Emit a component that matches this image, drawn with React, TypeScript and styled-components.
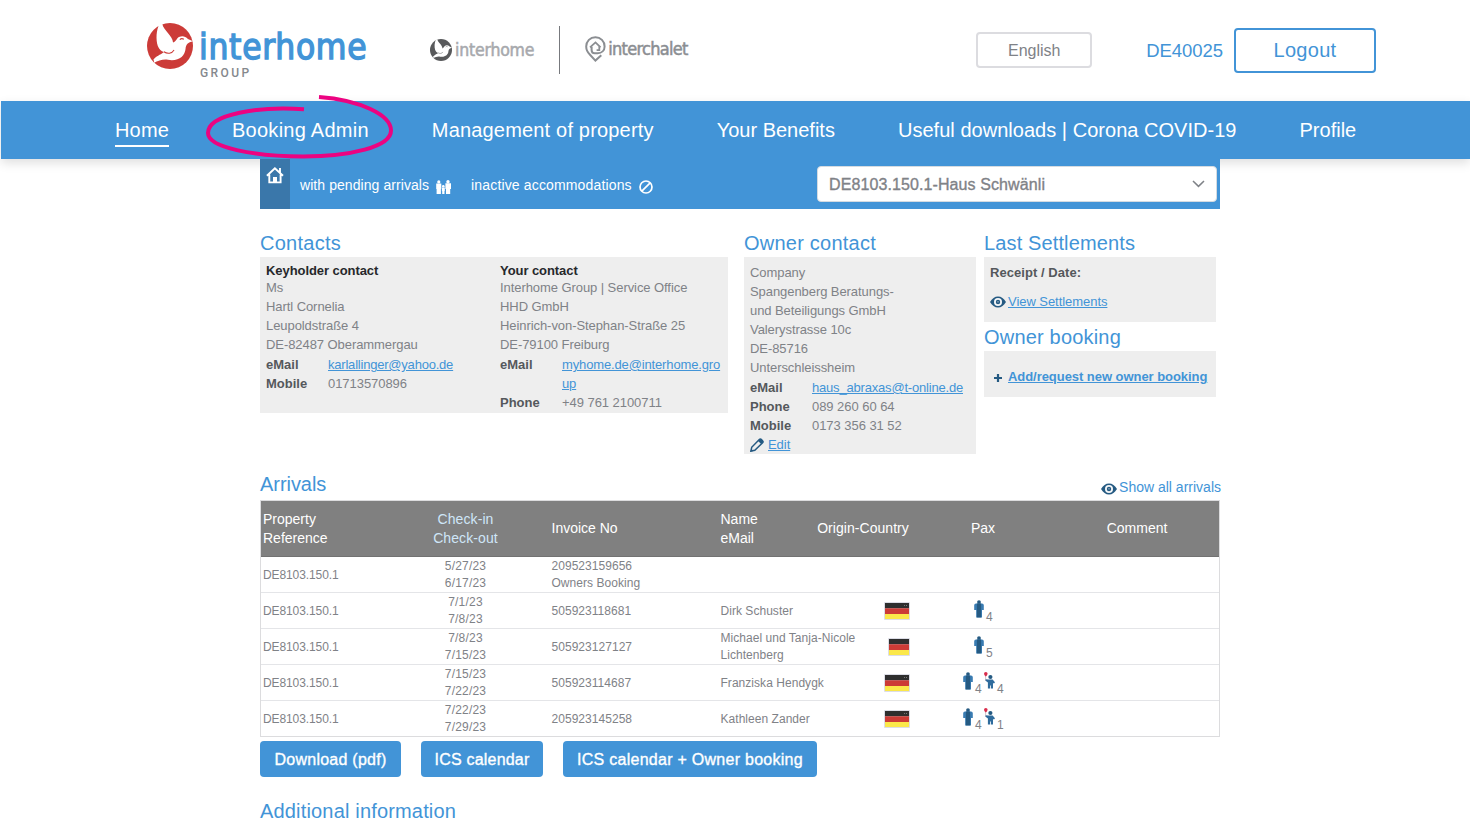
import React from 'react';
import styled, { createGlobalStyle } from 'styled-components';

const BLUE = '#4294d7';
const GREY = '#7f8287';
const NAVY = '#255a82';

const GlobalStyle = createGlobalStyle`
  * { box-sizing: border-box; }
  body { margin: 0; background: #fff; color: ${GREY}; font-family: "Liberation Sans", Arial, sans-serif; font-size: 13px; line-height: 19px; }
  #root { height: 827px; overflow: hidden; }
  a { color: ${BLUE}; }
  svg { display: block; flex: none; }
`;

/* Header */
const Header = styled.header`
  display: flex;
  align-items: flex-start;
  height: 101px;
  padding-left: 147px;
`;
const GroupLogo = styled.div`
  display: flex;
  width: 283px;
  padding-top: 23px;
  gap: 6px;
`;
const Wordmark = styled.div`
  display: flex;
  flex-direction: column;
  padding-top: 6px;
`;
const LogoName = styled.span`
  font: 35px/37px "DejaVu Sans Condensed", "DejaVu Sans", sans-serif;
  font-stretch: condensed;
  letter-spacing: 0.7px;
  color: ${BLUE};
  -webkit-text-stroke: 1.3px ${BLUE};
  white-space: nowrap;
`;
const LogoGroup = styled.span`
  padding-left: 1px;
  font: 500 12px/14px Roboto, sans-serif;
  letter-spacing: 2.4px;
  color: #85888d;
`;
const BrandLogo = styled.div<{ $top: number; $gap: number }>`
  display: flex;
  align-items: center;
  gap: ${p => p.$gap}px;
  height: 26px;
  margin-top: ${p => p.$top}px;
`;
const BrandName = styled.span<{ $color: string; $size: number; $spacing: number }>`
  font: ${p => p.$size}px/26px "DejaVu Sans Condensed", "DejaVu Sans", sans-serif;
  font-stretch: condensed;
  letter-spacing: ${p => p.$spacing}px;
  color: ${p => p.$color};
  -webkit-text-stroke: 0.5px ${p => p.$color};
  white-space: nowrap;
`;
const Divider = styled.div`
  width: 1px;
  height: 48px;
  margin: 26px 25px 0 25px;
  background: #77797d;
`;
const Account = styled.div`
  display: flex;
  align-items: center;
  height: 45px;
  margin: 28px 94px 0 auto;
`;
const LanguageButton = styled.button`
  width: 116px;
  height: 36px;
  margin: -1px 54px 0 0;
  padding: 1px 0 0;
  border: 2px solid #dcdce0;
  border-radius: 4px;
  background: #fff;
  color: ${GREY};
  font: 16px "Liberation Sans", sans-serif;
`;
const AccountId = styled.span`
  margin-right: 11px;
  color: ${BLUE};
  font-size: 18.5px;
  letter-spacing: -0.05px;
`;
const LogoutButton = styled.button`
  width: 142px;
  height: 45px;
  padding: 0;
  border: 2px solid ${BLUE};
  border-radius: 4px;
  background: #fff;
  color: ${BLUE};
  font: 20px "Liberation Sans", sans-serif;
  letter-spacing: 0.3px;
`;

/* Navigation */
const Nav = styled.nav`
  display: flex;
  gap: 63px;
  height: 58px;
  margin-left: 1px;
  padding-left: 114px;
  background: ${BLUE};
  box-shadow: 0 4px 10px rgba(0, 0, 0, 0.13);
`;
const NavItem = styled.div<{ $spacing: number }>`
  position: relative;
  color: #fff;
  font-size: 20px;
  line-height: 58px;
  letter-spacing: ${p => p.$spacing}px;
  white-space: nowrap;
`;
const ActiveLabel = styled.span`
  display: block;
  height: 46px;
  border-bottom: 2px solid #fff;
`;
const Marker = styled.svg`
  position: absolute;
  left: -32px;
  top: -9px;
  z-index: 2;
`;

/* Content */
const Page = styled.main`
  position: relative;
  width: 960px;
  margin-left: 260px;
`;
const Toolbar = styled.div`
  display: flex;
  height: 50px;
  background: ${BLUE};
  color: #fff;
  font-size: 14px;
`;
const HomeTile = styled.div`
  width: 30px;
  padding: 8px 0 0 6px;
  background: #3a77aa;
`;
const Filter = styled.div<{ $spacing: number; $left: number }>`
  display: flex;
  align-items: center;
  gap: 7px;
  height: 19px;
  margin: 17px 0 0 ${p => p.$left}px;
  letter-spacing: ${p => p.$spacing}px;
  white-space: nowrap;
  svg { margin-top: 3px; }
`;
const PropertySelect = styled.div`
  display: flex;
  align-items: center;
  justify-content: space-between;
  width: 400px;
  height: 36px;
  margin: 7px 3px 0 auto;
  padding: 0 11px;
  border: 1px solid #d5dbe1;
  border-radius: 4px;
  background: #fff;
  color: ${GREY};
  font-size: 16px;
  letter-spacing: 0.1px;
  -webkit-text-stroke: 0.35px ${GREY};
`;

const Heading = styled.h2<{ $spacing: number }>`
  height: 26px;
  margin: 0;
  color: ${BLUE};
  font-size: 20px;
  font-weight: 400;
  line-height: 24px;
  letter-spacing: ${p => p.$spacing}px;
  white-space: nowrap;
`;
const Cards = styled.div`
  display: flex;
  align-items: flex-start;
  padding-top: 22px;
`;
const Card = styled.section<{ $width: number; $gap: number }>`
  width: ${p => p.$width}px;
  margin-right: ${p => p.$gap}px;
`;
const Panel = styled.div<{ $top?: number; $bottom?: number }>`
  padding: ${p => p.$top ?? 6}px 6px ${p => p.$bottom ?? 0}px;
  background: #eee;
`;
const ContactsPanel = styled(Panel)`
  display: grid;
  grid-template-columns: 234px 1fr;
`;
const PersonTitle = styled.div`
  height: 15px;
  color: #26282b;
  font-weight: 700;
  line-height: 15px;
  letter-spacing: -0.07px;
`;
const Line = styled.div`
  letter-spacing: -0.07px;
  white-space: nowrap;
`;
const Details = styled.dl`
  display: grid;
  grid-template-columns: 62px 1fr;
  margin: 1px 0 0;
`;
const Term = styled.dt`
  color: #55585c;
  font-weight: 700;
`;
const Value = styled.dd<{ $spacing?: number }>`
  margin: 0 -2px 0 0;
  letter-spacing: ${p => p.$spacing ?? -0.05}px;
`;
const StrongLine = styled.div`
  color: #55585c;
  font-weight: 700;
  letter-spacing: 0.05px;
`;
const IconLink = styled.div<{ $gap: number; $top?: number; $bold?: boolean }>`
  display: flex;
  align-items: center;
  gap: ${p => p.$gap}px;
  margin-top: ${p => p.$top ?? 0}px;
  font-weight: ${p => (p.$bold ? 700 : 400)};
  letter-spacing: -0.05px;
  white-space: nowrap;
`;
const PlusSlot = styled.span`
  padding: 2px 0 0 4px;
`;
const BookingHeading = styled(Heading)`
  margin-top: 3px;
`;

/* Arrivals */
const SectionHead = styled.div`
  display: flex;
  justify-content: space-between;
  height: 28px;
  margin-top: 18px;
`;
const ShowAll = styled.div`
  display: flex;
  align-items: center;
  gap: 2px;
  height: 19px;
  margin: 6px -1px 0 0;
  color: ${BLUE};
  font-size: 14px;
  svg { margin-top: 3px; }
`;
const Table = styled.div`
  border: 1px solid #dcdcde;
`;
const Row = styled.div`
  display: grid;
  grid-template-columns: 121px 167px 169px 97px 96px 144px 164px;
  align-items: center;
  height: 36px;
  border-bottom: 1px solid #e4e5e8;
  font-size: 12px;
  line-height: 17px;
  &:last-child { height: 35px; border-bottom: 0; }
`;
const HeadRow = styled(Row)`
  height: 56px;
  border-bottom: 1px solid #727272;
  background: #808080;
  color: #fff;
  font-size: 14px;
  line-height: 19px;
`;
const Cell = styled.div<{ $align?: string; $left?: number; $spacing?: number; $single?: boolean }>`
  padding-top: ${p => (p.$single ? 2 : 0)}px;
  padding-left: ${p => p.$left ?? 0}px;
  text-align: ${p => p.$align ?? 'left'};
  letter-spacing: ${p => p.$spacing ?? 0}px;
  white-space: nowrap;
`;
const SortCell = styled(Cell)`
  color: #cfe6f8;
`;
const FlagCell = styled.div`
  display: flex;
  justify-content: flex-end;
  padding-right: 1px;
`;
const PaxCell = styled.div<{ $left: number }>`
  display: flex;
  align-items: flex-start;
  height: 35px;
  padding: 7px 0 0 ${p => p.$left}px;
`;
const Count = styled.span<{ $gap?: number }>`
  width: 7px;
  margin: 9px ${p => p.$gap ?? 0}px 0 2px;
`;

const Actions = styled.div`
  display: flex;
  gap: 20px;
  margin-top: 4px;
`;
const ActionButton = styled.button<{ $spacing: number; $width: number }>`
  width: ${p => p.$width}px;
  height: 36px;
  padding: 1px 0 0;
  border: 0;
  border-radius: 4px;
  background: ${BLUE};
  color: #fff;
  font: 16px "Liberation Sans", sans-serif;
  letter-spacing: ${p => p.$spacing}px;
  -webkit-text-stroke: 0.35px #fff;
  white-space: nowrap;
`;
const InfoHeading = styled(Heading)`
  margin-top: 22px;
`;

const Bird = ({ size, color }: { size: number; color: string }) => (
  <svg width={size} height={size} viewBox="0 0 136 136">
    <circle cx="68" cy="68" r="68" fill={color} />
    <path d="M37 3C27 20 26 50 32 68C36 78 42 83 50 86C43 93 33 94 19 108Q22 114 20 118C34 112 48 106 62 109C94 114 112 98 114 76C115 64 121 57 136 54L121 47C112 37 98 37 90 45C86 51 82 56 77 58C76 36 50 24 45 2Z" fill="#fff" />
    <path d="M50 85C60 92 74 91 80 80M97 49Q102 44 109 48" fill="none" stroke={color} strokeWidth="3" />
  </svg>
);
const ChaletPin = () => (
  <svg width="21" height="26" viewBox="0 0 21 26" fill="none" stroke="#8b8e92" strokeWidth="2">
    <path d="M16.3 19.2L10.4 24.6L5 18.8C2.5 16.4 1.2 13.8 1.2 10.6C1.2 5.2 5.2 1.2 10.4 1.2S19.6 5.2 19.6 10.4C19.6 14.6 16.6 17.2 12.6 17.2H9.6C7.4 17.2 6.6 15.6 6.6 14V10.8" />
    <path d="M5 11.4L10.5 6.4L15.6 11.4M14.3 10.6V14.2H11.6" strokeWidth="1.8" />
  </svg>
);
const Eye = () => (
  <svg width="16" height="12" viewBox="0 0 16 12">
    <path d="M0 6C2 2.5 4.8 .5 8 .5S14 2.5 16 6C14 9.5 11.2 11.5 8 11.5S2 9.5 0 6Z" fill={NAVY} />
    <circle cx="8" cy="6" r="4" fill="#f4f6f8" />
    <circle cx="8" cy="6" r="2.2" fill={NAVY} />
    <circle cx="8" cy="5.8" r=".6" fill="#f4f6f8" />
  </svg>
);
const HouseIcon = () => (
  <svg width="18" height="17" viewBox="0 0 18 17" fill="none" stroke="#fff" strokeWidth="1.9">
    <path d="M.9 8.8L8.9 1.4L17 8.8M3.3 7.4V15.4H14.6V7.4M14 1V5.5" />
    <path d="M7 10H11V16H7Z" fill="#fff" stroke="none" />
  </svg>
);
const FamilyIcon = () => (
  <svg width="15" height="14" viewBox="0 0 15 14" fill="#fff">
    <circle cx="2.8" cy="1.9" r="1.6" /><circle cx="12" cy="1.7" r="1.7" /><circle cx="7.3" cy="6.2" r="1.3" />
    <path d="M.2 3.4H5.3V8.8H4.9V14H.6V9H.2ZM9.4 3.2H15V9H14.2V14H10V9H9.4ZM5.9 7.6H8.8V11H8.5V14H6.2V11H5.9Z" />
  </svg>
);
const BanIcon = () => (
  <svg width="14" height="14" viewBox="0 0 14 14" fill="none" stroke="#fff" strokeWidth="1.7">
    <circle cx="7" cy="7" r="6" /><path d="M2.8 11.2L11.2 2.8" />
  </svg>
);
const Pencil = () => (
  <svg width="14" height="14" viewBox="0 0 14 14">
    <path d="M.9 13.1L1.7 9.3L9.3 1.5Q10.3 .5 11.2 1.4L12.7 2.9Q13.5 3.8 12.6 4.7L4.8 12.3Z" fill="#eee" stroke={NAVY} strokeWidth="1.5" />
    <path d="M8 2.9L9.3 1.5Q10.3 .5 11.2 1.4L12.7 2.9Q13.5 3.8 12.6 4.7L11.2 6.1ZM.4 13.7L1.2 10.8L3.3 12.9Z" fill={NAVY} />
  </svg>
);
const Plus = () => (
  <svg width="8" height="8" viewBox="0 0 8 8" fill="none" stroke={NAVY} strokeWidth="2.2">
    <path d="M0 4H8M4 0V8" />
  </svg>
);
const GermanFlag = ({ width }: { width: number }) => (
  <svg width={width} height="18" viewBox={`0 0 ${width} 18`}>
    <rect width={width} height="18" rx="1" fill="#dcdde6" />
    <rect x="1" y="1" width={width - 2} height="5.3" fill="#2e2e2e" />
    <rect x="1" y="6.3" width={width - 2} height="5.7" fill="#cc3b36" />
    <rect x="1" y="12" width={width - 2} height="5" fill="#fbe84a" />
    {width > 22 && <path d="M20 3.5h1M22 3.5h1" stroke="#777" />}
  </svg>
);
const Adult = () => (
  <svg width="10" height="18" viewBox="0 0 10 18">
    <circle cx="5" cy="2.1" r="1.9" fill={NAVY} />
    <path d="M2 3.4H8Q9.8 3.6 9.8 5.2V10H8V17.6H2.2V10H.2V5.2Q.2 3.6 2 3.4Z" fill="#3a7cb2" />
    <path d="M2.9 3.4H7.1V17.4H2.9Z" fill={NAVY} />
  </svg>
);
const Child = () => (
  <svg width="11" height="17" viewBox="0 0 11 17">
    <path d="M1.6 3V9" stroke="#c9b3bb" strokeWidth=".8" />
    <path d="M0 1.8Q0 0 1.8 0T3.6 1.8Q3.4 3.6 1.8 4.6Q.2 3.6 0 1.8Z" fill="#d92d4c" />
    <circle cx="6.4" cy="5" r="2.1" fill={NAVY} />
    <path d="M1.6 7.2L4.4 7.6H8.6L11 10.2L10 11.6L9 11V16.6H6.9V13.6H6.1V16.6H3.9V10.4L1.6 8.8Z" fill="#2f6c9d" />
  </svg>
);
const Chevron = () => (
  <svg width="13" height="8" viewBox="0 0 13 8" fill="none" stroke={GREY} strokeWidth="1.5">
    <path d="M1 1L6.5 6.4L12 1" />
  </svg>
);

type Arrival = { dates: [string, string]; invoice: string[]; name?: string[]; flag?: number; adults?: number; children?: number };
const arrivals: Arrival[] = [
  { dates: ['5/27/23', '6/17/23'], invoice: ['209523159656', 'Owners Booking'] },
  { dates: ['7/1/23', '7/8/23'], invoice: ['505923118681'], name: ['Dirk Schuster'], flag: 26, adults: 4 },
  { dates: ['7/8/23', '7/15/23'], invoice: ['505923127127'], name: ['Michael und Tanja-Nicole', 'Lichtenberg'], flag: 22, adults: 5 },
  { dates: ['7/15/23', '7/22/23'], invoice: ['505923114687'], name: ['Franziska Hendygk'], flag: 26, adults: 4, children: 4 },
  { dates: ['7/22/23', '7/29/23'], invoice: ['205923145258'], name: ['Kathleen Zander'], flag: 26, adults: 4, children: 1 },
];
const lines = (items: string[] = []) => items.map(t => <div key={t}>{t}</div>);

export default function App() {
  return (
    <>
      <GlobalStyle />
      <Header>
        <GroupLogo>
          <Bird size={46} color="#cc3b38" />
          <Wordmark>
            <LogoName>interhome</LogoName>
            <LogoGroup>GROUP</LogoGroup>
          </Wordmark>
        </GroupLogo>
        <BrandLogo $top={37} $gap={3}>
          <Bird size={22} color="#58595b" />
          <BrandName $color="#a7a9ad" $size={17.5} $spacing={-0.2}>interhome</BrandName>
        </BrandLogo>
        <Divider />
        <BrandLogo $top={36} $gap={2}>
          <ChaletPin />
          <BrandName $color="#8b8e92" $size={18} $spacing={-0.7}>interchalet</BrandName>
        </BrandLogo>
        <Account>
          <LanguageButton>English</LanguageButton>
          <AccountId>DE40025</AccountId>
          <LogoutButton>Logout</LogoutButton>
        </Account>
      </Header>
      <Nav>
        <NavItem $spacing={0.16}><ActiveLabel>Home</ActiveLabel></NavItem>
        <NavItem $spacing={0.26}>
          Booking Admin
          <Marker width="200" height="72" viewBox="0 0 200 72" fill="none" stroke="#ec0381" strokeWidth="4">
            <path d="M104 17.3C60 14 8 22 8 41C8 56 56 64.5 103 64.5C150 64.5 191 55 191 38.5C191 23 160 8 119 5" />
          </Marker>
        </NavItem>
        <NavItem $spacing={0.18}>Management of property</NavItem>
        <NavItem $spacing={0}>Your Benefits</NavItem>
        <NavItem $spacing={0.03}>Useful downloads | Corona COVID-19</NavItem>
        <NavItem $spacing={0}>Profile</NavItem>
      </Nav>
      <Page>
        <Toolbar>
          <HomeTile><HouseIcon /></HomeTile>
          <Filter $spacing={0.07} $left={10}>with pending arrivals<FamilyIcon /></Filter>
          <Filter $spacing={0.15} $left={20}>inactive accommodations<BanIcon /></Filter>
          <PropertySelect>DE8103.150.1-Haus Schwänli<Chevron /></PropertySelect>
        </Toolbar>
        <Cards>
          <Card $width={468} $gap={16}>
            <Heading $spacing={0.26}>Contacts</Heading>
            <ContactsPanel $bottom={1}>
              <div>
                <PersonTitle>Keyholder contact</PersonTitle>
                <Line>Ms</Line>
                <Line>Hartl Cornelia</Line>
                <Line>Leupoldstraße 4</Line>
                <Line>DE-82487 Oberammergau</Line>
                <Details>
                  <Term>eMail</Term>
                  <Value $spacing={-0.21}><a href="#mail">karlallinger@yahoo.de</a></Value>
                  <Term>Mobile</Term>
                  <Value>01713570896</Value>
                </Details>
              </div>
              <div>
                <PersonTitle>Your contact</PersonTitle>
                <Line>Interhome Group | Service Office</Line>
                <Line>HHD GmbH</Line>
                <Line>Heinrich-von-Stephan-Straße 25</Line>
                <Line>DE-79100 Freiburg</Line>
                <Details>
                  <Term>eMail</Term>
                  <Value $spacing={-0.14}><a href="#mail">myhome.de@interhome.gro<br />up</a></Value>
                  <Term>Phone</Term>
                  <Value>+49 761 2100711</Value>
                </Details>
              </div>
            </ContactsPanel>
          </Card>
          <Card $width={232} $gap={8}>
            <Heading $spacing={0.23}>Owner contact</Heading>
            <Panel>
              <Line>Company</Line>
              <Line>Spangenberg Beratungs-</Line>
              <Line>und Beteiligungs GmbH</Line>
              <Line>Valerystrasse 10c</Line>
              <Line>DE-85716</Line>
              <Line>Unterschleissheim</Line>
              <Details>
                <Term>eMail</Term>
                <Value $spacing={-0.19}><a href="#mail">haus_abraxas@t-online.de</a></Value>
                <Term>Phone</Term>
                <Value>089 260 60 64</Value>
                <Term>Mobile</Term>
                <Value>0173 356 31 52</Value>
              </Details>
              <IconLink $gap={4}><Pencil /><a href="#edit">Edit</a></IconLink>
            </Panel>
          </Card>
          <Card $width={232} $gap={0}>
            <Heading $spacing={0.13}>Last Settlements</Heading>
            <Panel $bottom={11}>
              <StrongLine>Receipt / Date:</StrongLine>
              <IconLink $gap={2} $top={10}><Eye /><a href="#settlements">View Settlements</a></IconLink>
            </Panel>
            <BookingHeading $spacing={0.19}>Owner booking</BookingHeading>
            <Panel $top={16} $bottom={11}>
              <IconLink $gap={6} $bold><PlusSlot><Plus /></PlusSlot><a href="#booking">Add/request new owner booking</a></IconLink>
            </Panel>
          </Card>
        </Cards>
        <SectionHead>
          <Heading $spacing={-0.05}>Arrivals</Heading>
          <ShowAll><Eye />Show all arrivals</ShowAll>
        </SectionHead>
        <Table>
          <HeadRow>
            <Cell $left={2}>Property<br />Reference</Cell>
            <SortCell $align="center" $spacing={0.1}>Check-in<br />Check-out</SortCell>
            <Cell $left={2.5}>Invoice No</Cell>
            <Cell $left={2.5}>Name<br />eMail</Cell>
            <Cell $align="center" $spacing={0.05}>Origin-Country</Cell>
            <Cell $align="center">Pax</Cell>
            <Cell $align="center">Comment</Cell>
          </HeadRow>
          {arrivals.map(a => (
            <Row key={a.dates[0]}>
              <Cell $left={2} $spacing={-0.1} $single>DE8103.150.1</Cell>
              <Cell $align="center" $spacing={0.2}>{lines(a.dates)}</Cell>
              <Cell $left={2.5} $spacing={0.04} $single={a.invoice.length === 1}>{lines(a.invoice)}</Cell>
              <Cell $left={2.5} $spacing={0.04} $single={a.name?.length === 1}>{lines(a.name)}</Cell>
              <FlagCell>{a.flag && <GermanFlag width={a.flag} />}</FlagCell>
              <PaxCell $left={a.children ? 52 : 63}>
                {a.adults && <><Adult /><Count $gap={2}>{a.adults}</Count></>}
                {a.children && <><Child /><Count>{a.children}</Count></>}
              </PaxCell>
            </Row>
          ))}
        </Table>
        <Actions>
          <ActionButton $width={141} $spacing={0.25}>Download (pdf)</ActionButton>
          <ActionButton $width={122} $spacing={0.21}>ICS calendar</ActionButton>
          <ActionButton $width={254} $spacing={0.27}>ICS calendar + Owner booking</ActionButton>
        </Actions>
        <InfoHeading $spacing={0.17}>Additional information</InfoHeading>
      </Page>
    </>
  );
}
